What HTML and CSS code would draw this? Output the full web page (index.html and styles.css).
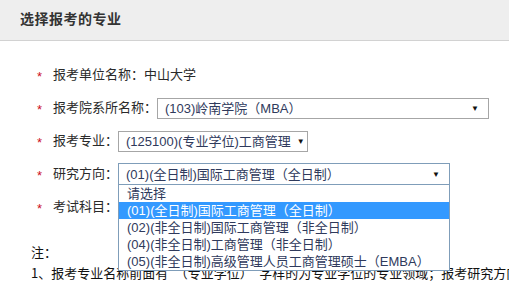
FILE: index.html
```html
<!DOCTYPE html>
<html lang="zh-CN">
<head>
<meta charset="utf-8">
<title>选择报考的专业</title>
<link rel="stylesheet" href="styles.css">
</head>
<body>
<div class="page">
  <div class="header">选择报考的专业</div>
  <div class="form">
    <div class="row">
      <span class="star">*</span>
      <span class="label">报考单位名称：</span>
      <span class="value">中山大学</span>
    </div>
    <div class="row">
      <span class="star">*</span>
      <span class="label">报考院系所名称：</span>
      <div class="select select-wide">
        <span class="select-text">(103)岭南学院（MBA）</span>
        <span class="arrow">▼</span>
      </div>
    </div>
    <div class="row">
      <span class="star">*</span>
      <span class="label">报考专业：</span>
      <div class="select select-mid">
        <span class="select-text">(125100)(专业学位)工商管理</span>
        <span class="arrow">▼</span>
      </div>
    </div>
    <div class="row">
      <span class="star">*</span>
      <span class="label">研究方向：</span>
      <div class="select select-wide select-open">
        <span class="select-text">(01)(全日制)国际工商管理（全日制）</span>
        <span class="arrow">▼</span>
        <ul class="options">
          <li class="option">请选择</li>
          <li class="option option-active">(01)(全日制)国际工商管理（全日制）</li>
          <li class="option">(02)(非全日制)国际工商管理（非全日制）</li>
          <li class="option">(04)(非全日制)工商管理（非全日制）</li>
          <li class="option">(05)(非全日制)高级管理人员工商管理硕士（EMBA）</li>
        </ul>
      </div>
    </div>
    <div class="row">
      <span class="star">*</span>
      <span class="label">考试科目：</span>
    </div>
  </div>
  <div class="notes">
    <div class="note-line">注：</div>
    <div class="note-line">1、报考专业名称前面有“（专业学位）”字样的为专业学位的专业领域；报考研究方向的</div>
  </div>
</div>
</body>
</html>
```

FILE: styles.css
```css
html, body {
  margin: 0;
  padding: 0;
  background: #ffffff;
}
body {
  width: 509px;
  height: 295px;
  overflow: hidden;
  font-family: "Liberation Sans", "Noto Sans CJK SC", sans-serif;
  font-size: 13px;
  color: #333333;
}
.page {
  width: 509px;
}
.header {
  height: 40px;
  line-height: 38px;
  padding-left: 20px;
  background: #eeeeee;
  border-bottom: 1px solid #d2d2d2;
  font-size: 14px;
  font-weight: bold;
  color: #333333;
  letter-spacing: 0.5px;
}
.form {
  padding-top: 23px;
}
.row {
  display: flex;
  align-items: center;
  height: 22px;
  margin-bottom: 11px;
  padding-left: 36px;
  line-height: 22px;
  white-space: nowrap;
}
.star {
  width: 17px;
  color: #cc1122;
  font-size: 13px;
  padding-top: 3px;
  box-sizing: border-box;
  padding-left: 1px;
}
.label {
  color: #2a2a2a;
}
.value {
  color: #2a2a2a;
}
.select {
  position: relative;
  display: flex;
  align-items: center;
  justify-content: space-between;
  height: 21px;
  box-sizing: border-box;
  border: 1px solid #a6a6a6;
  background: #ffffff;
  padding-left: 7px;
  padding-right: 7px;
}
.select-wide {
  width: 332px;
}
.select-mid {
  width: 190px;
}
.select-open {
  border-color: #7f9db9;
  height: 22px;
}
.select-text {
  color: #2f3a5c;
  line-height: 19px;
}
.arrow {
  font-size: 8px;
  color: #111111;
  line-height: 19px;
  padding-right: 2px;
  padding-left: 6px;
}
.options {
  position: absolute;
  left: -1px;
  top: 21px;
  width: 332px;
  box-sizing: border-box;
  margin: 0;
  padding: 0;
  list-style: none;
  border: 1px solid #7f9db9;
  border-top: none;
  background: #ffffff;
  z-index: 5;
}
.option {
  height: 17px;
  line-height: 17px;
  padding-left: 8px;
  color: #2f3a5c;
}
.option-active {
  background: #3399ff;
  color: #ffffff;
}
.notes {
  padding-left: 31px;
  margin-top: 23px;
  color: #111111;
  white-space: nowrap;
  font-family: "Noto Sans CJK SC", sans-serif;
}
.note-line {
  height: 21px;
  line-height: 21px;
}
```
